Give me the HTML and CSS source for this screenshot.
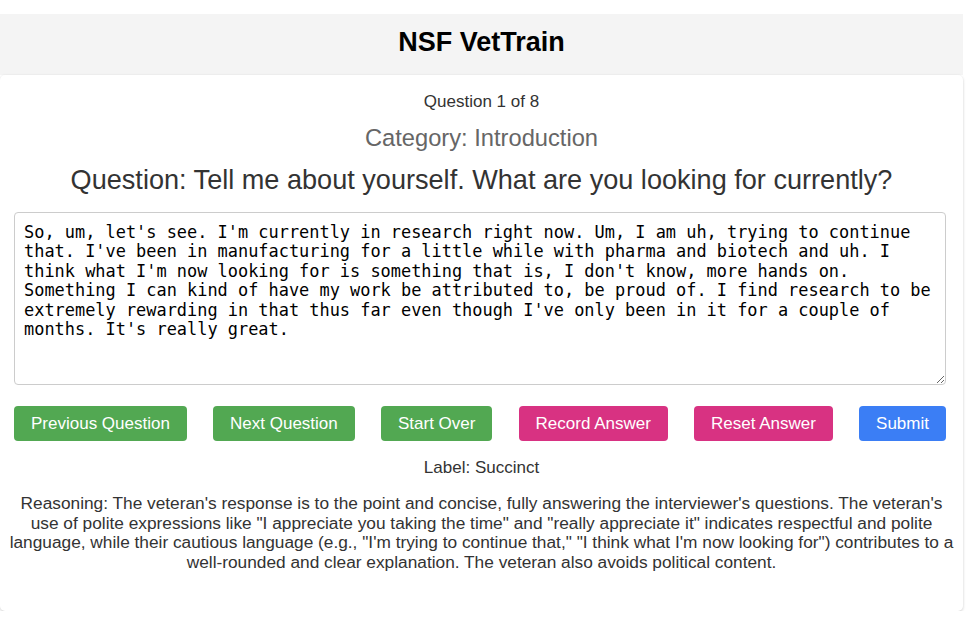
FILE: index.html
```html
<!DOCTYPE html>
<html lang="en">
<head>
<meta charset="utf-8">
<title>NSF VetTrain</title>
<link rel="stylesheet" href="styles.css">
</head>
<body>
<header class="header"><h1 class="title">NSF VetTrain</h1></header>
<main class="card">
  <p class="counter">Question 1 of 8</p>
  <h2 class="category">Category: Introduction</h2>
  <h3 class="question">Question: Tell me about yourself. What are you looking for currently?</h3>
  <textarea class="answer" spellcheck="false">So, um, let's see. I'm currently in research right now. Um, I am uh, trying to continue that. I've been in manufacturing for a little while with pharma and biotech and uh. I think what I'm now looking for is something that is, I don't know, more hands on. Something I can kind of have my work be attributed to, be proud of. I find research to be extremely rewarding in that thus far even though I've only been in it for a couple of months. It's really great.</textarea>
  <div class="actions">
    <button class="btn btn-green">Previous Question</button>
    <button class="btn btn-green">Next Question</button>
    <button class="btn btn-green">Start Over</button>
    <button class="btn btn-pink">Record Answer</button>
    <button class="btn btn-pink">Reset Answer</button>
    <button class="btn btn-blue">Submit</button>
  </div>
  <p class="label">Label: Succinct</p>
  <p class="reasoning">Reasoning: The veteran's response is to the point and concise, fully answering the interviewer's questions. The veteran's use of polite expressions like "I appreciate you taking the time" and "really appreciate it" indicates respectful and polite language, while their cautious language (e.g., "I'm trying to continue that," "I think what I'm now looking for") contributes to a well-rounded and clear explanation. The veteran also avoids political content.</p>
</main>
</body>
</html>
```
FILE: styles.css
```css
* { box-sizing: border-box; }
body {
  margin: 0;
  background: #fff;
  font-family: "Liberation Sans", Arial, sans-serif;
  color: #333;
}
.header {
  margin-top: 14px;
  width: 963px;
  height: 61px;
  padding-top: 13px;
  background: #f4f4f4;
  display: flex;
  align-items: flex-start;
  justify-content: center;
}
.title {
  margin: 0;
  font-size: 27px;
  font-weight: bold;
  color: #000;
  line-height: 30px;
}
.card {
  width: 963px;
  background: #fff;
  border-radius: 5px;
  box-shadow: 0 1px 3px rgba(0,0,0,0.2);
  padding: 17px 9px 39px;
  text-align: center;
}
.counter {
  margin: 0;
  font-size: 17px;
  line-height: 20px;
  color: #333;
}
.category {
  margin: 12.5px 0 0;
  font-size: 23.7px;
  line-height: 27px;
  font-weight: normal;
  color: #666;
}
.question {
  margin: 13.5px 0 0;
  font-size: 27.1px;
  line-height: 30px;
  font-weight: normal;
  color: #333;
}
.answer {
  display: block;
  margin: 17px 5px 0;
  width: 932px;
  height: 173px;
  padding: 10px 9px 9px;
  border: 1px solid #ccc;
  border-radius: 4px;
  font-family: "DejaVu Sans Mono", monospace;
  font-size: 16.93px;
  line-height: 19.4px;
  color: #000;
  text-align: left;
  resize: vertical;
}
.actions {
  margin: 21px 0 0 5px;
  width: 932px;
  display: flex;
  justify-content: space-between;
}
.btn {
  height: 35px;
  padding: 0 17px;
  border: none;
  border-radius: 4px;
  font-family: "Liberation Sans", Arial, sans-serif;
  font-size: 17px;
  color: #fff;
  cursor: pointer;
}
.btn-green { background: #52a852; }
.btn-pink { background: #d83282; }
.btn-blue { background: #3b7ef5; }
.label {
  margin: 17px 0 0;
  font-size: 17px;
  line-height: 20px;
}
.reasoning {
  margin: 16px 0 0;
  font-size: 17.3px;
  line-height: 19.5px;
}
```
